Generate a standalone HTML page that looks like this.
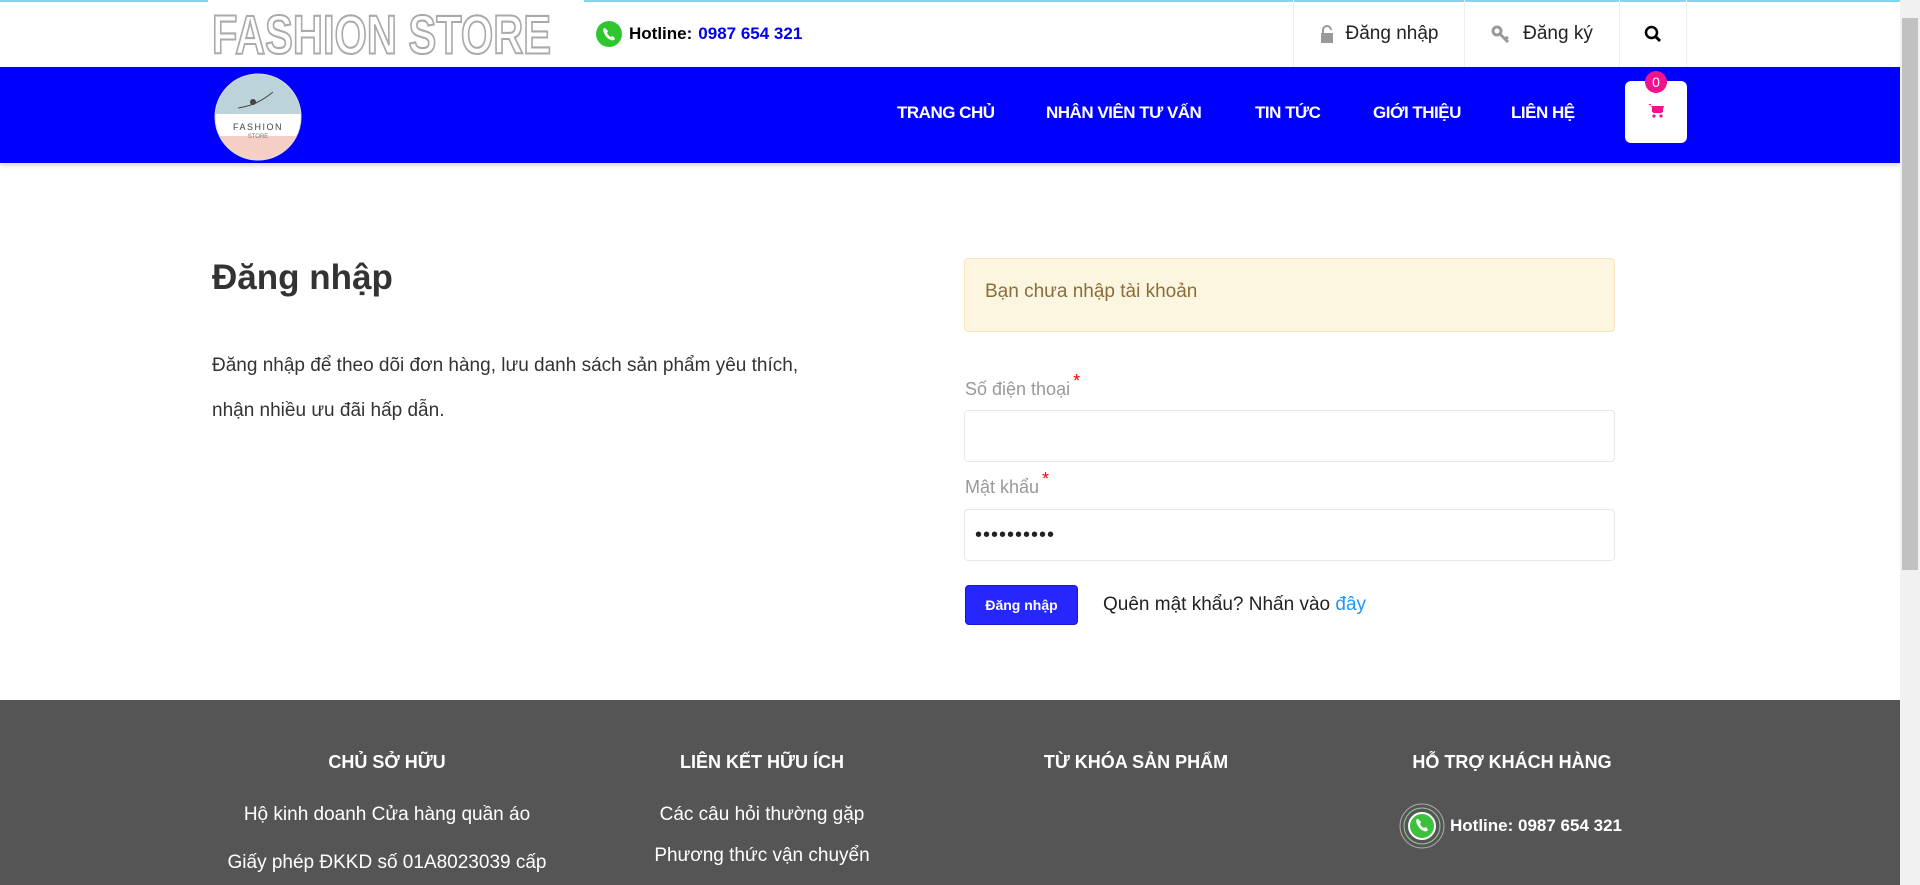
<!DOCTYPE html>
<html><head><meta charset="utf-8"><style>
*{margin:0;padding:0;box-sizing:border-box}
body{width:1920px;height:885px;overflow:hidden;font-family:"Liberation Sans",sans-serif;background:#fff;position:relative;color:#333}
.abs{position:absolute}
.topline{left:0;top:0;width:1900px;height:2px;background:#7fd8ee}
.logobg{left:208px;top:0;width:376px;height:67px;background:#fff}
.logoimg{left:212px;top:4px;white-space:nowrap;font:bold 52px "Liberation Sans",sans-serif;color:#fff;-webkit-text-stroke:2px #aaa;line-height:60px;transform:scale(.8,1.05);transform-origin:left top}
.hot{left:595px;top:20px;font-size:17px;font-weight:bold;color:#000;display:flex;align-items:center;gap:6px}
.hot b{color:#0000ee}
.tr{top:0;height:67px;border-left:1px solid #eee;display:flex;align-items:center;justify-content:center;font-size:19px;color:#222}
.nav{left:0;top:67px;width:1900px;height:96px;background:#0000ff;box-shadow:0 3px 4px #ddd}
.nv{top:103px;color:#fff;font-weight:bold;font-size:17px;letter-spacing:-.5px}
.cart{left:1625px;top:81px;width:62px;height:62px;background:#fff;border-radius:6px}
.badge{left:1645px;top:71px;width:22px;height:22px;border-radius:50%;background:#f0148c;color:#fff;font-size:14px;text-align:center;line-height:22px}
h1{position:absolute;left:212px;top:258px;font-size:35px;font-weight:600;color:#333}
.p{left:212px;top:343px;font-size:19px;line-height:45px;color:#333}
.alert{left:964px;top:258px;width:651px;height:74px;background:#fcf6e1;border:1px solid #f5e6bf;border-radius:4px;color:#8a6d3b;font-size:19px;padding:22px 20px}
.lbl{left:965px;font-size:18px;color:#999}
.lbl i{color:red;font-style:normal;position:relative;top:-8px;margin-left:3px}
.inp{left:964px;width:651px;height:52px;border:1px solid #e8e8e8;border-radius:4px;background:#fff}
.btn{left:965px;top:585px;width:113px;height:40px;background:#2626ff;border:1px solid #1a1acc;border-radius:4px;color:#fff;font-size:14px;font-weight:bold;text-align:center;line-height:38px}
.fg{left:1103px;top:594px;font-size:19px;color:#222}
.fg span{color:#2196f3}
.foot{left:0;top:700px;width:1900px;height:185px;background:#555}
.fh{top:752px;color:#fff;font-weight:bold;font-size:18px;transform:translateX(-50%);white-space:nowrap}
.ft{color:#fff;font-size:19px;transform:translateX(-50%);white-space:nowrap}
.sb{left:1900px;top:0;width:20px;height:885px;background:#f1f1f1}
.th{left:1902px;top:18px;width:16px;height:552px;background:#c1c1c1}
</style></head><body>
<div class="abs topline"></div>
<div class="abs logobg"></div>
<div class="abs logoimg">FASHION STORE</div>
<div class="abs hot"><svg width="28" height="28" viewBox="0 0 28 28"><circle cx="14" cy="14" r="13" fill="#2ec52e"/><path d="M9 8c-1 1-1 3 0 5 2 4 4 6 7 7 2 1 3 0 4-1l-2-3-2 1c-2-1-3-2-4-4l1-2-3-3z" fill="#fff"/></svg>Hotline: <b>0987 654 321</b></div>
<div class="abs tr" style="left:1293px;width:171px"><svg width="14" height="18" viewBox="0 0 14 18" style="margin-right:12px"><rect x="1" y="8" width="12" height="10" fill="#999"/><path d="M3 8V5a4 4 0 0 1 8 0" stroke="#999" stroke-width="2" fill="none"/></svg>Đăng nhập</div>
<div class="abs tr" style="left:1464px;width:155px"><svg width="20" height="18" viewBox="0 0 20 18" style="margin-right:12px"><circle cx="6" cy="6" r="4" stroke="#999" stroke-width="3" fill="none"/><path d="M9 9l8 8M14 14l3-2" stroke="#999" stroke-width="3"/></svg>Đăng ký</div>
<div class="abs tr" style="left:1619px;width:68px;border-right:1px solid #eee"><svg width="18" height="18" viewBox="0 0 18 18"><circle cx="7.5" cy="7.5" r="5.5" stroke="#000" stroke-width="2.5" fill="none"/><path d="M11.5 11.5l4.5 4.5" stroke="#000" stroke-width="3"/></svg></div>
<div class="abs nav"></div>
<svg class="abs" style="left:213px;top:72px" width="90" height="90" viewBox="0 0 90 90"><defs><clipPath id="c"><ellipse cx="45" cy="45" rx="43" ry="43"/></clipPath></defs><g clip-path="url(#c)"><rect width="90" height="90" fill="#fff"/><rect width="90" height="42" fill="#bcd3da"/><rect y="64" width="90" height="30" fill="#f5cfc6"/><path d="M25 36c15-2 25-8 35-16" stroke="#444" fill="none"/><circle cx="40" cy="30" r="3" fill="#444"/><text x="45" y="58" font-size="9" text-anchor="middle" fill="#444" letter-spacing="1.5" font-family="Liberation Sans">FASHION</text><text x="45" y="66" font-size="6" text-anchor="middle" fill="#777" font-family="Liberation Sans">STORE</text></g><ellipse cx="45" cy="45" rx="43" ry="43" stroke="#ddd" fill="none"/></svg>
<div class="abs nv" style="left:897px">TRANG CHỦ</div>
<div class="abs nv" style="left:1046px">NHÂN VIÊN TƯ VẤN</div>
<div class="abs nv" style="left:1255px">TIN TỨC</div>
<div class="abs nv" style="left:1373px">GIỚI THIỆU</div>
<div class="abs nv" style="left:1511px">LIÊN HỆ</div>
<div class="abs cart"><svg style="margin:22px 0 0 23px" width="16" height="16" viewBox="0 0 16 16"><path d="M0 1h3l2 9h9l2-7H4" fill="#f0148c"/><rect x="4" y="3" width="11" height="6" fill="#f0148c"/><circle cx="6" cy="13" r="1.6" fill="#f0148c"/><circle cx="13" cy="13" r="1.6" fill="#f0148c"/></svg></div>
<div class="abs badge">0</div>
<h1>Đăng nhập</h1>
<div class="abs p">Đăng nhập để theo dõi đơn hàng, lưu danh sách sản phẩm yêu thích,<br>nhận nhiều ưu đãi hấp dẫn.</div>
<div class="abs alert">Bạn chưa nhập tài khoản</div>
<div class="abs lbl" style="top:379px">Số điện thoại<i>*</i></div>
<div class="abs inp" style="top:410px"></div>
<div class="abs lbl" style="top:477px">Mật khẩu<i>*</i></div>
<div class="abs inp" style="top:509px;padding:8px 10px;font-size:20px;letter-spacing:1px;color:#222;line-height:34px">••••••••••</div>
<div class="abs btn">Đăng nhập</div>
<div class="abs fg">Quên mật khẩu? Nhấn vào <span>đây</span></div>
<div class="abs foot"></div>
<div class="abs fh" style="left:387px">CHỦ SỞ HỮU</div>
<div class="abs fh" style="left:762px">LIÊN KẾT HỮU ÍCH</div>
<div class="abs fh" style="left:1136px">TỪ KHÓA SẢN PHẨM</div>
<div class="abs fh" style="left:1512px">HỖ TRỢ KHÁCH HÀNG</div>
<div class="abs ft" style="left:387px;top:804px">Hộ kinh doanh Cửa hàng quần áo</div>
<div class="abs ft" style="left:387px;top:852px">Giấy phép ĐKKD số 01A8023039 cấp</div>
<div class="abs ft" style="left:762px;top:804px">Các câu hỏi thường gặp</div>
<div class="abs ft" style="left:762px;top:845px">Phương thức vận chuyển</div>
<div class="abs" style="left:1398px;top:802px;display:flex;align-items:center;color:#fff;font-weight:bold;font-size:17px;gap:4px"><svg width="48" height="48" viewBox="0 0 48 48"><circle cx="24" cy="24" r="22" stroke="#aaa" fill="none"/><circle cx="24" cy="24" r="18" stroke="#9c9" fill="none"/><circle cx="24" cy="24" r="13" fill="#3bc13b" stroke="#fff" stroke-width="2"/><path d="M19 17c-1 1-1 3 0 5 2 4 4 6 7 7 2 1 3 0 4-1l-2-3-2 1c-2-1-3-2-4-4l1-2-3-3z" fill="#fff"/></svg>Hotline: 0987 654 321</div>
<div class="abs sb"></div>
<div class="abs th"></div>
</body></html>
